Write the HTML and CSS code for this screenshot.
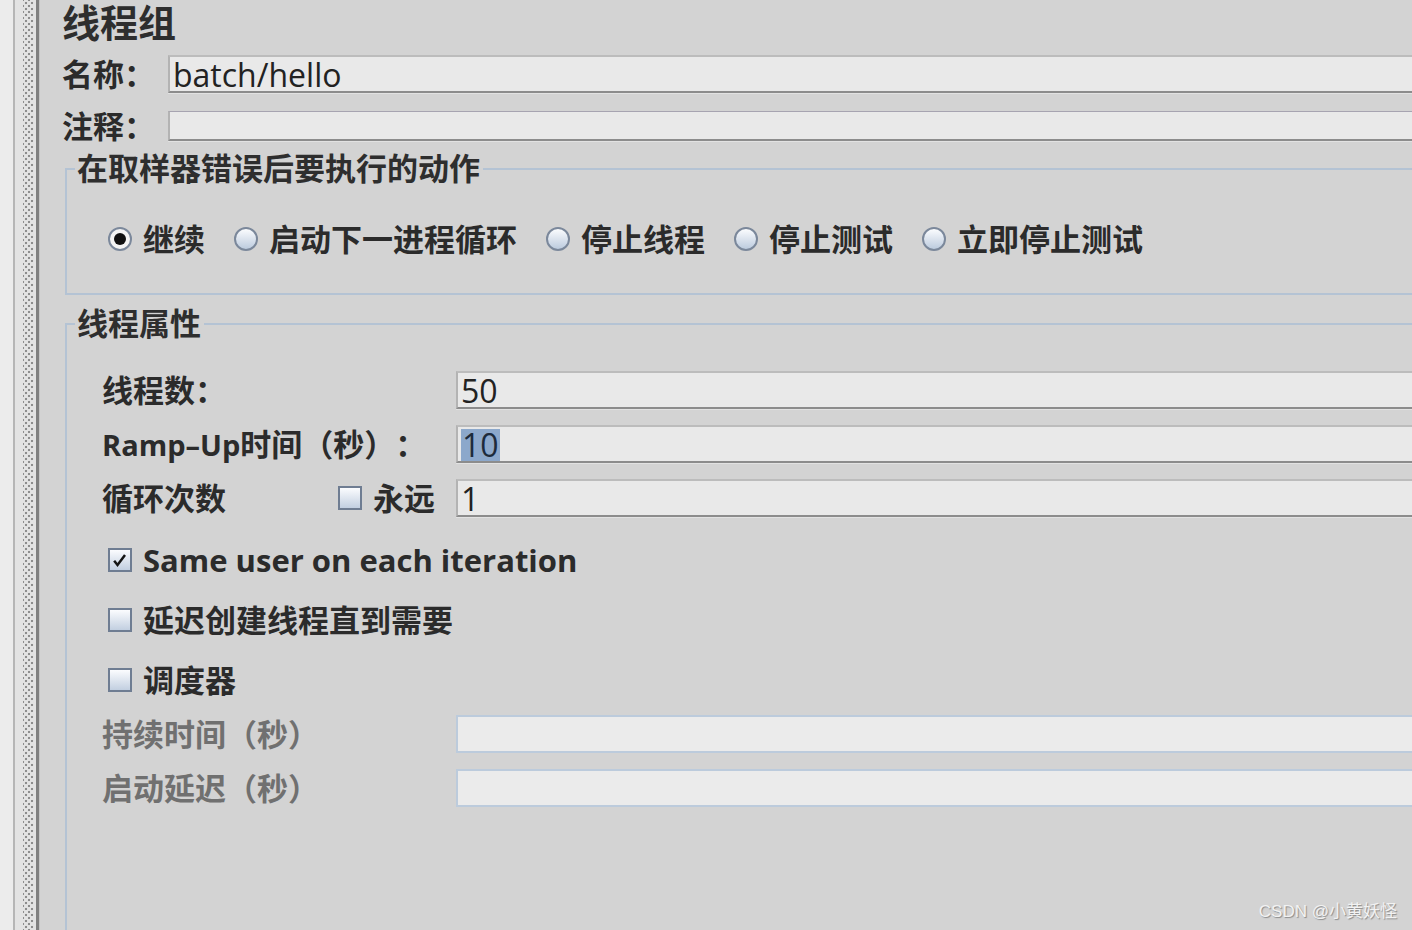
FILE: index.html
```html
<!DOCTYPE html>
<html lang="zh-CN">
  <head>
    <meta charset="UTF-8" />
    <title>线程组</title>
    <link rel="stylesheet" href="styles.css">
  </head>
  <body>
    <div class="app">
      <div class="splitter"><div class="grip"></div></div>
      <div class="panel">
        <h1 class="title">线程组</h1>
        <div class="field-row name-row">
          <span class="field-label">名称：</span>
          <div class="text-field">batch/hello</div>
        </div>
        <div class="field-row comment-row">
          <span class="field-label">注释：</span>
          <div class="text-field"></div>
        </div>

        <fieldset class="group">
          <legend>在取样器错误后要执行的动作</legend>
          <div class="radio-row">
            <span class="option"><span class="radio checked"></span>继续</span>
            <span class="option"><span class="radio"></span>启动下一进程循环</span>
            <span class="option"><span class="radio"></span>停止线程</span>
            <span class="option"><span class="radio"></span>停止测试</span>
            <span class="option"><span class="radio"></span>立即停止测试</span>
          </div>
        </fieldset>

        <fieldset class="group props">
          <legend>线程属性</legend>
          <div class="props-body">
            <div class="prop-row">
              <span class="prop-label">线程数：</span>
              <div class="text-field">50</div>
            </div>
            <div class="prop-row">
              <span class="prop-label"><span class="latin">Ramp–Up</span>时间（秒）：</span>
              <div class="text-field"><span class="selected">10</span></div>
            </div>
            <div class="prop-row">
              <span class="prop-label loop-label">
                循环次数
                <span class="option"><span class="checkbox"></span>永远</span>
              </span>
              <div class="text-field">1</div>
            </div>

            <div class="check-row first">
              <span class="checkbox">
                <svg viewBox="0 0 24 24" width="20" height="20"><polyline points="5,13 9,18 18,6" fill="none" stroke="#151515" stroke-width="3"/></svg>
              </span>
              <span class="latin">Same user on each iteration</span>
            </div>
            <div class="check-row">
              <span class="checkbox"></span>延迟创建线程直到需要
            </div>
            <div class="check-row">
              <span class="checkbox"></span>调度器
            </div>

            <div class="prop-row disabled first-disabled">
              <span class="prop-label">持续时间（秒）</span>
              <div class="text-field"></div>
            </div>
            <div class="prop-row disabled">
              <span class="prop-label">启动延迟（秒）</span>
              <div class="text-field"></div>
            </div>
          </div>
        </fieldset>
      </div>
    </div>
    <div class="watermark">CSDN @小黄妖怪</div>
  </body>
</html>
```

FILE: styles.css
```css
body {
  margin: 0;
  height: 930px;
  overflow: hidden;
  background-color: #d3d3d3;
  font-family: "Open Sans", "Noto Sans CJK SC", sans-serif;
  color: #2b2b2b;
  position: relative;
  text-spacing-trim: space-all;
}
.app {
  display: flex;
  height: 100%;
}
.splitter {
  width: 40px;
  flex: none;
  background: linear-gradient(to right, #ececec 0 13px, #b6b6b6 13px 15px, #e3e3e3 15px 36px, #808080 36px 39px, #c4c4c4 39px 40px);
}
.grip {
  margin-left: 23px;
  width: 11px;
  height: 100%;
  background-image:
    radial-gradient(circle, #8d8d8d 1px, transparent 1.6px),
    radial-gradient(circle, #8d8d8d 1px, transparent 1.6px);
  background-size: 6px 6px, 6px 6px;
  background-position: 0 0, 3px 3px;
}
.panel {
  flex: 1;
  padding-left: 22px;
  min-width: 0;
}
.title {
  margin: 0 0 11px;
  height: 44px;
  font-size: 38px;
  line-height: 44px;
  font-weight: 700;
  color: #2e2e2e;
}
.field-row {
  display: flex;
  align-items: center;
  height: 38px;
  font-size: 31px;
  line-height: 1;
  font-weight: 700;
}
.field-label {
  width: 106px;
  flex: none;
}
.comment-row {
  margin-top: 18px;
  height: 30px;
}
.comment-row .text-field {
  height: 27px;
  border-top: 1px solid #a7a4b1;
}
.text-field {
  flex: 1;
  height: 34px;
  background-color: #e9e9e9;
  border-top: 2px solid #bcbcbc;
  border-left: 2px solid #b3b3b3;
  border-bottom: 2px solid #8c8c8c;
  box-shadow: 0 1px 0 #e2e2e2;
  font-size: 32px;
  font-weight: 400;
  line-height: 36px;
  padding-left: 3px;
  color: #222;
  white-space: nowrap;
}
.selected {
  background-color: #8ca8cb;
  color: #1d2b3c;
  display: inline-block;
  line-height: 32px;
  padding: 0 1px;
}

.group {
  margin: 12px 0 0 3px;
  border: 2px solid #b4c3d4;
  border-right: none;
  padding: 0 0 0 8px;
  min-width: 0;
}
.group legend {
  padding: 0 3px 0 2px;
  font-size: 31px;
  line-height: 31px;
  font-weight: 700;
  color: #2e2e2e;
}
.radio-row {
  display: flex;
  align-items: center;
  padding: 40px 0 39px 33px;
  font-size: 31px;
  line-height: 30px;
  font-weight: 700;
}
.option {
  display: inline-flex;
  align-items: center;
  margin-right: 29px;
  white-space: nowrap;
}
.radio {
  width: 20px;
  height: 20px;
  border-radius: 50%;
  border: 2px solid #7b889b;
  background: linear-gradient(#fbfcfe, #bccbde);
  margin-right: 11px;
  position: relative;
  flex: none;
}
.radio.checked {
  background: #f4f4f4;
}
.radio.checked::after {
  content: "";
  position: absolute;
  left: 4px;
  top: 4px;
  width: 12px;
  height: 12px;
  border-radius: 50%;
  background-color: #111;
}

.props {
  margin-top: 13px;
  height: 640px;
}
.props-body {
  padding: 32px 0 0 27px;
  font-size: 31px;
  line-height: 1;
  font-weight: 700;
}
.prop-row {
  display: flex;
  align-items: center;
  height: 38px;
  margin-bottom: 16px;
}
.prop-label {
  width: 354px;
  flex: none;
  white-space: nowrap;
}
.latin {
  font-family: "Open Sans", sans-serif;
  font-weight: 700;
}
.prop-label .latin {
  font-size: 29px;
}
.loop-label {
  display: flex;
  justify-content: space-between;
  align-items: center;
  padding-right: 21px;
  box-sizing: border-box;
}
.loop-label .option {
  margin-right: 0;
}
.checkbox {
  width: 20px;
  height: 20px;
  border: 2px solid #6f7d92;
  background: linear-gradient(#fbfcfe, #c2cfe0);
  margin-right: 11px;
  flex: none;
  display: inline-flex;
  align-items: center;
  justify-content: center;
}
.check-row {
  display: flex;
  align-items: center;
  height: 30px;
  margin: 30px 0 0 6px;
  white-space: nowrap;
}
.check-row.first {
  margin-top: 28px;
}
.check-row .latin {
  font-size: 31px;
}
.first-disabled {
  margin-top: 20px;
}
.disabled .prop-label {
  color: #707070;
}
.disabled .text-field {
  background-color: #ebebeb;
  border: 2px solid #bccbdc;
  border-right: none;
  box-shadow: none;
  height: 34px;
}

.watermark {
  position: absolute;
  right: 15px;
  bottom: 8px;
  font-family: "Liberation Sans", "Noto Sans CJK SC", sans-serif;
  font-size: 17px;
  color: #f2f2f2;
  text-shadow: 1px 1px 1px #8a8a8a;
}
```
